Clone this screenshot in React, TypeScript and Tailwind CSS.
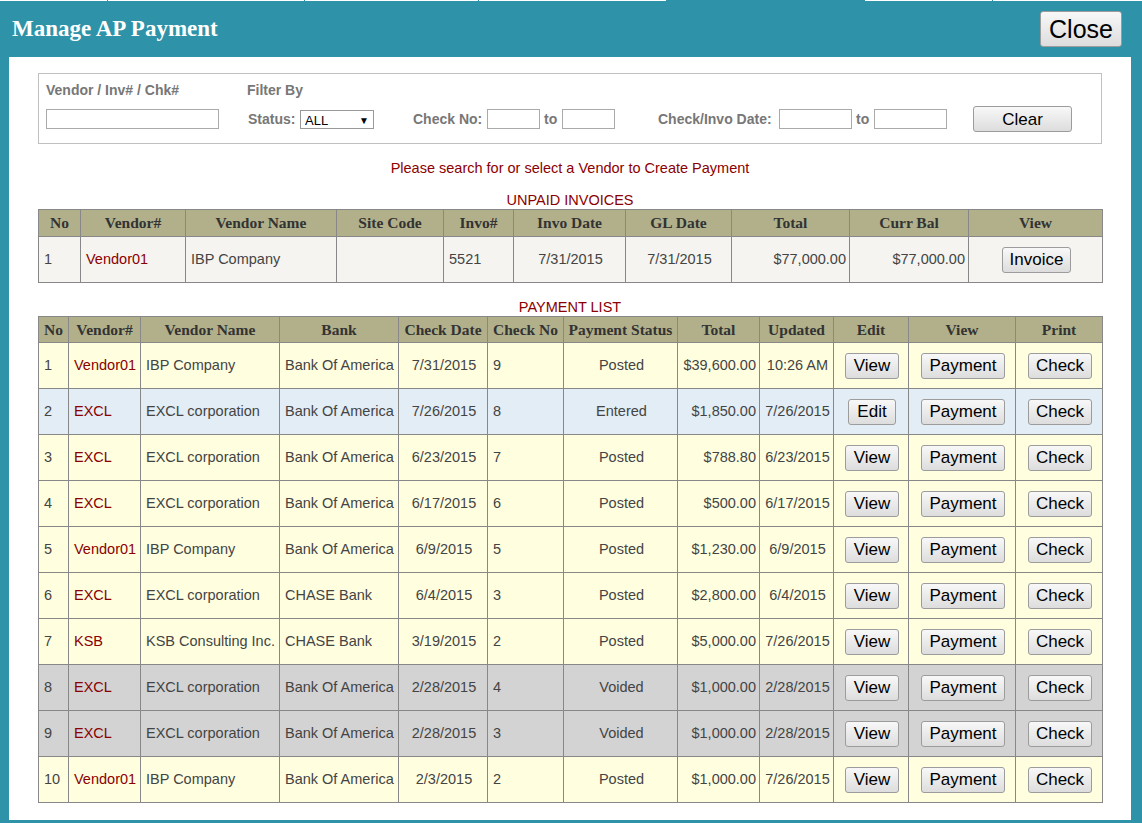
import clsx from 'clsx';

const serif = "font-['Liberation_Serif','Times_New_Roman',serif]";
const sans = "font-['Liberation_Sans',Arial,sans-serif]";

type Tone = 'y' | 'b' | 'g';

const payments: {
  no: number;
  vid: string;
  name: string;
  bank: string;
  date: string;
  chk: string;
  status: string;
  total: string;
  updated: string;
  edit: string;
  tone: Tone;
}[] = [
  { no: 1, vid: 'Vendor01', name: 'IBP Company', bank: 'Bank Of America', date: '7/31/2015', chk: '9', status: 'Posted', total: '$39,600.00', updated: '10:26 AM', edit: 'View', tone: 'y' },
  { no: 2, vid: 'EXCL', name: 'EXCL corporation', bank: 'Bank Of America', date: '7/26/2015', chk: '8', status: 'Entered', total: '$1,850.00', updated: '7/26/2015', edit: 'Edit', tone: 'b' },
  { no: 3, vid: 'EXCL', name: 'EXCL corporation', bank: 'Bank Of America', date: '6/23/2015', chk: '7', status: 'Posted', total: '$788.80', updated: '6/23/2015', edit: 'View', tone: 'y' },
  { no: 4, vid: 'EXCL', name: 'EXCL corporation', bank: 'Bank Of America', date: '6/17/2015', chk: '6', status: 'Posted', total: '$500.00', updated: '6/17/2015', edit: 'View', tone: 'y' },
  { no: 5, vid: 'Vendor01', name: 'IBP Company', bank: 'Bank Of America', date: '6/9/2015', chk: '5', status: 'Posted', total: '$1,230.00', updated: '6/9/2015', edit: 'View', tone: 'y' },
  { no: 6, vid: 'EXCL', name: 'EXCL corporation', bank: 'CHASE Bank', date: '6/4/2015', chk: '3', status: 'Posted', total: '$2,800.00', updated: '6/4/2015', edit: 'View', tone: 'y' },
  { no: 7, vid: 'KSB', name: 'KSB Consulting Inc.', bank: 'CHASE Bank', date: '3/19/2015', chk: '2', status: 'Posted', total: '$5,000.00', updated: '7/26/2015', edit: 'View', tone: 'y' },
  { no: 8, vid: 'EXCL', name: 'EXCL corporation', bank: 'Bank Of America', date: '2/28/2015', chk: '4', status: 'Voided', total: '$1,000.00', updated: '2/28/2015', edit: 'View', tone: 'g' },
  { no: 9, vid: 'EXCL', name: 'EXCL corporation', bank: 'Bank Of America', date: '2/28/2015', chk: '3', status: 'Voided', total: '$1,000.00', updated: '2/28/2015', edit: 'View', tone: 'g' },
  { no: 10, vid: 'Vendor01', name: 'IBP Company', bank: 'Bank Of America', date: '2/3/2015', chk: '2', status: 'Posted', total: '$1,000.00', updated: '7/26/2015', edit: 'View', tone: 'y' },
];

const toneBg: Record<Tone, string> = {
  y: 'bg-[#ffffe0]',
  b: 'bg-[#e2edf5]',
  g: 'bg-[#d3d3d3]',
};

function Btn({ children, className }: { children: React.ReactNode; className?: string }) {
  return (
    <button
      className={clsx(
        'rounded-[3px] border border-[#9c9c9c] bg-linear-to-b from-[#f8f8f8] to-[#dddddd] font-normal leading-none text-black',
        sans,
        className
      )}
    >
      {children}
    </button>
  );
}

function Th({ children }: { children: React.ReactNode }) {
  return (
    <th className={clsx('border border-[#888] bg-[#b1b08b] p-0 text-center text-[15.5px] font-bold text-[#333]', serif)}>
      {children}
    </th>
  );
}

const td = 'border border-[#888] py-0 pl-[5px] pr-[3px]';

export default function App() {
  return (
    <div className={clsx('min-h-[823px] w-full bg-[#2e93a8]', sans)}>
      {/* strip of tabs peeking above the dialog */}
      <div className="flex h-px">
        <div className="w-[107px] bg-white" />
        <div className="ml-px w-[196px] bg-white" />
        <div className="ml-px w-[173px] bg-white" />
        <div className="ml-px w-[187px] bg-white" />
        <div className="ml-[199px] w-[127px] bg-white" />
        <div className="ml-px flex-1 bg-white" />
      </div>

      <div className="flex h-[56px] items-center justify-between pl-[12px] pr-[20px]">
        <h1 className={clsx('text-[23px] font-bold text-white', serif)}>Manage AP Payment</h1>
        <Btn className="h-[36px] w-[82px] text-[25px]">Close</Btn>
      </div>

      <div className="ml-[9px] mr-[11px] bg-white px-[29px] pb-[17px] pt-[16px]">
        {/* filters */}
        <div className="h-[71px] border border-[#c0c0c0] pl-[7px] pt-[8px] text-[14px] font-bold text-[#777]">
          <div className="flex h-[17px] items-center">
            <span className="w-[201px]">Vendor / Inv# / Chk#</span>
            <span>Filter By</span>
          </div>
          <div className="mt-[6px] flex h-[28px] items-center">
            <input className="h-[20px] w-[173px] border border-[#aaa] bg-white" />
            <span className="ml-[29px] w-[52px]">Status:</span>
            <div className="relative h-[19px] w-[74px]">
              <select className="h-full w-full appearance-none border border-[#999] bg-white pl-[4px] text-[13px] font-normal text-black">
                <option>ALL</option>
              </select>
              <span className="pointer-events-none absolute right-[5px] top-[3px] text-[10px] font-normal text-black">▼</span>
            </div>
            <span className="ml-[39px] w-[74px]">Check No:</span>
            <input className="h-[20px] w-[53px] border border-[#aaa] bg-white" />
            <span className="ml-[4px] w-[18px]">to</span>
            <input className="h-[20px] w-[53px] border border-[#aaa] bg-white" />
            <span className="ml-[43px] w-[121px]">Check/Invo Date:</span>
            <input className="h-[20px] w-[73px] border border-[#aaa] bg-white" />
            <span className="ml-[4px] w-[18px]">to</span>
            <input className="h-[20px] w-[73px] border border-[#aaa] bg-white" />
            <Btn className="ml-[26px] h-[26px] w-[99px] text-[17px]">Clear</Btn>
          </div>
        </div>

        <p className="mt-[14px] h-[20px] text-center text-[14.5px] leading-[20px] text-[#8b0000]">
          Please search for or select a Vendor to Create Payment
        </p>
        <p className="mt-[13px] h-[18px] text-center text-[14.5px] leading-[18px] text-[#8b0000]">UNPAID INVOICES</p>

        <table className="w-[1064px] table-fixed border-collapse text-[14.5px] text-[#444]">
          <colgroup>
            {[42, 105, 151, 107, 70, 112, 106, 118, 119, 134].map((w, i) => (
              <col key={i} style={{ width: w }} />
            ))}
          </colgroup>
          <thead>
            <tr className="h-[27px]">
              <Th>No</Th>
              <Th>Vendor#</Th>
              <Th>Vendor Name</Th>
              <Th>Site Code</Th>
              <Th>Invo#</Th>
              <Th>Invo Date</Th>
              <Th>GL Date</Th>
              <Th>Total</Th>
              <Th>Curr Bal</Th>
              <Th>View</Th>
            </tr>
          </thead>
          <tbody>
            <tr className="h-[46px] bg-[#f5f4f0]">
              <td className={td}>1</td>
              <td className={clsx(td, 'text-[#8b0000]')}>Vendor01</td>
              <td className={td}>IBP Company</td>
              <td className={td}></td>
              <td className={td}>5521</td>
              <td className={clsx(td, 'text-center')}>7/31/2015</td>
              <td className={clsx(td, 'text-center')}>7/31/2015</td>
              <td className={clsx(td, 'text-right')}>$77,000.00</td>
              <td className={clsx(td, 'text-right')}>$77,000.00</td>
              <td className={clsx(td, 'text-center')}>
                <Btn className="h-[26px] px-[7px] text-[17px]">Invoice</Btn>
              </td>
            </tr>
          </tbody>
        </table>

        <p className="mt-[15px] h-[18px] text-center text-[14.5px] leading-[18px] text-[#8b0000]">PAYMENT LIST</p>

        <table className="w-[1064px] table-fixed border-collapse text-[14.5px] text-[#444]">
          <colgroup>
            {[30, 72, 139, 119, 89, 76, 114, 82, 74, 75, 107, 87].map((w, i) => (
              <col key={i} style={{ width: w }} />
            ))}
          </colgroup>
          <thead>
            <tr className="h-[26px]">
              <Th>No</Th>
              <Th>Vendor#</Th>
              <Th>Vendor Name</Th>
              <Th>Bank</Th>
              <Th>Check Date</Th>
              <Th>Check No</Th>
              <Th>Payment Status</Th>
              <Th>Total</Th>
              <Th>Updated</Th>
              <Th>Edit</Th>
              <Th>View</Th>
              <Th>Print</Th>
            </tr>
          </thead>
          <tbody>
            {payments.map((p) => (
              <tr key={p.no} className={clsx('h-[46px]', toneBg[p.tone])}>
                <td className={td}>{p.no}</td>
                <td className={clsx(td, 'text-[#8b0000]')}>{p.vid}</td>
                <td className={td}>{p.name}</td>
                <td className={td}>{p.bank}</td>
                <td className={clsx(td, 'text-center')}>{p.date}</td>
                <td className={td}>{p.chk}</td>
                <td className={clsx(td, 'text-center')}>{p.status}</td>
                <td className={clsx(td, 'text-right')}>{p.total}</td>
                <td className={clsx(td, 'whitespace-nowrap text-center')}>{p.updated}</td>
                <td className={clsx(td, 'text-center')}>
                  <Btn className="h-[26px] px-[8px] text-[17px]">{p.edit}</Btn>
                </td>
                <td className={clsx(td, 'text-center')}>
                  <Btn className="h-[26px] px-[7px] text-[17px]">Payment</Btn>
                </td>
                <td className={clsx(td, 'text-center')}>
                  <Btn className="h-[26px] px-[7px] text-[17px]">Check</Btn>
                </td>
              </tr>
            ))}
          </tbody>
        </table>
      </div>
    </div>
  );
}
